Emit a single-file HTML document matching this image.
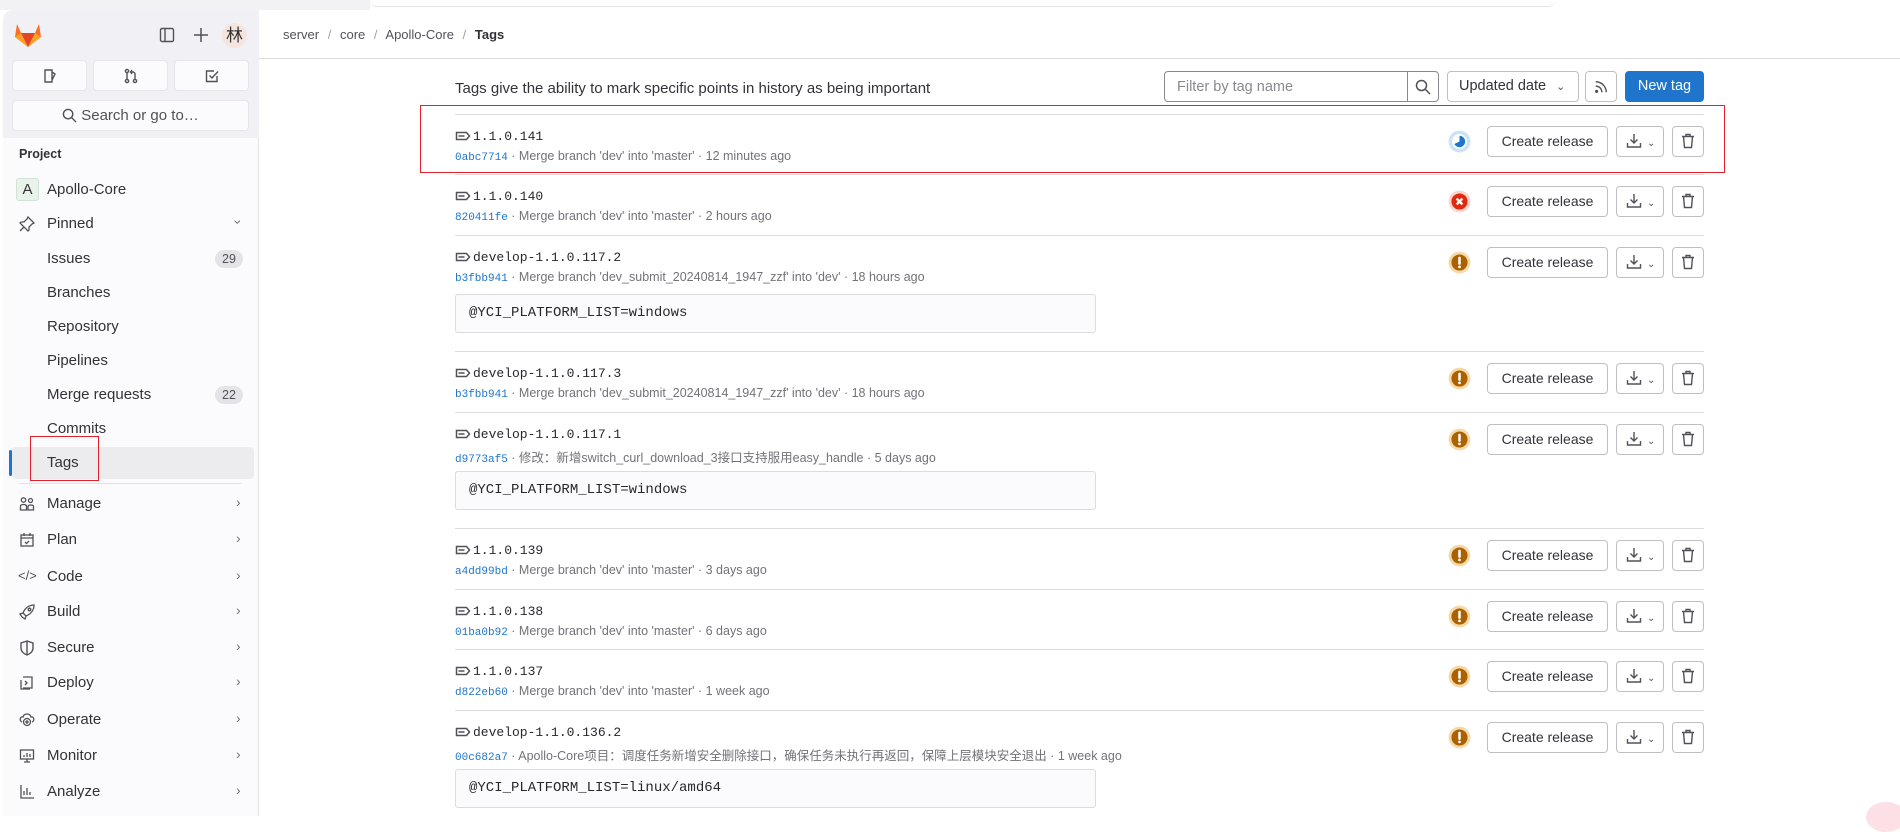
<!DOCTYPE html>
<html><head><meta charset="utf-8"><style>
*{box-sizing:border-box;margin:0;padding:0}
body{width:1900px;height:816px;overflow:hidden;background:#fff;font-family:"Liberation Sans","Noto Sans CJK SC",sans-serif;color:#333238;position:relative}
.a{position:absolute}
#side{left:3px;top:10px;width:256px;height:806px;background:#fbfafd;border-right:1px solid #e3e3e8;border-top-left-radius:10px}
#sidehead{left:3px;top:10px;width:256px;height:128px;background:#f1f0f4;border-top-left-radius:10px}
.sbtn{background:#fbfafd;border:1px solid #e6e5ea;border-radius:4px;height:31px}
.nav{left:47px;font-size:15px;color:#333238}
.ico{left:17px;width:16px;height:16px}
.chev{left:236px;font-size:14px;color:#737278}
.badge{background:#e4e3e8;border-radius:10px;font-size:12.5px;color:#535158;padding:2px 7px}
.mono{font-family:"Liberation Mono",monospace}
.row-name{left:473px;font-size:13px;color:#28272d}
.meta{left:455px;font-size:12.5px;color:#737278;white-space:nowrap}
.meta .mono{color:#1f75cb;font-size:11px}
.div{left:455px;width:1249px;height:1px;background:#dcdcde}
.btn{border:1px solid #bfbfc3;border-radius:4px;background:#fff;height:31px;font-size:14px;color:#333238;text-align:center;line-height:29px;white-space:nowrap}
.code{left:455px;width:641px;height:39px;background:#fbfafd;border:1px solid #dcdcde;border-radius:3px;font-family:"Liberation Mono",monospace;font-size:14px;padding-left:13px;line-height:37px;color:#28272d}
</style></head><body>
<div class="a" style="left:0;top:0;width:370px;height:10px;background:#f2f2f4"></div>
<div class="a" style="left:370px;top:0;width:1185px;height:7px;background:#fff;border-bottom:1px solid #e3e3e3;border-radius:0 0 8px 8px"></div>
<div class="a" id="side"></div>
<div class="a" id="sidehead"></div>
<svg class="a" style="left:14px;top:22px" width="28" height="26" viewBox="0 0 28 26"><path d="M14 25 L1 15 L3 2 L7 11 H21 L25 2 L27 15 Z" fill="#fc6d26"/><path d="M14 25 L7 11 H21 Z" fill="#e24329"/><path d="M1 15 L7 11 L14 25Z" fill="#fca326"/><path d="M27 15 L21 11 L14 25Z" fill="#fca326"/></svg>
<svg class="a" style="left:159px;top:27px" width="16" height="16" viewBox="0 0 16 16" fill="none" stroke="#535158" stroke-width="1.4"><rect x="1.5" y="1.5" width="13" height="13" rx="1.5"/><path d="M6 1.5v13"/></svg>
<svg class="a" style="left:193px;top:27px" width="16" height="16" viewBox="0 0 16 16" stroke="#535158" stroke-width="1.5"><path d="M8 1v14M1 8h14"/></svg>
<div class="a" style="left:222px;top:23px;width:25px;height:25px;border-radius:50%;background:#f6e4df;font-size:17px;text-align:center;line-height:25px;color:#333">林</div>
<div class="a sbtn" style="left:12px;top:60px;width:75px"></div>
<div class="a sbtn" style="left:93px;top:60px;width:75px"></div>
<div class="a sbtn" style="left:174px;top:60px;width:75px"></div>
<svg class="a" style="left:42px;top:68px" width="16" height="16" viewBox="0 0 16 16" fill="none" stroke="#535158" stroke-width="1.4"><path d="M3 2h7v12H3z M10 4l3 2-3 6"/></svg>
<svg class="a" style="left:123px;top:68px" width="16" height="16" viewBox="0 0 16 16" fill="none" stroke="#535158" stroke-width="1.4"><circle cx="4" cy="3" r="1.6"/><circle cx="4" cy="13" r="1.6"/><circle cx="12" cy="13" r="1.6"/><path d="M4 5v6M12 11V6c0-1-1-2-2-2H8M9 2 7.5 4 9 6"/></svg>
<svg class="a" style="left:204px;top:68px" width="16" height="16" viewBox="0 0 16 16" fill="none" stroke="#535158" stroke-width="1.4"><path d="M13 8v5.5H2.5V3H10"/><path d="M5.5 7.5 8 10l6-6.5"/></svg>
<div class="a sbtn" style="left:12px;top:100px;width:237px;height:31px;font-size:15px;color:#535158;text-align:center;line-height:29px"><svg style="vertical-align:-3px;margin-right:4px" width="15" height="15" viewBox="0 0 16 16" fill="none" stroke="#535158" stroke-width="1.5"><circle cx="6.5" cy="6.5" r="5"/><path d="M10.5 10.5 15 15"/></svg>Search or go to…</div>
<div class="a" style="left:19px;top:147px;font-size:12.5px;font-weight:bold;color:#333238">Project</div>
<div class="a" style="left:16px;top:178px;width:23px;height:23px;background:#e9f3ec;border:1px solid #d0e4d6;border-radius:3px;font-size:15px;text-align:center;line-height:21px;color:#333">A</div>
<div class="a nav" style="top:181px">Apollo-Core</div>
<svg class="a ico" style="top:216px;left:19px" viewBox="0 0 16 16" fill="none" stroke="#535158" stroke-width="1.3"><path d="M9 1l6 6-2 1-3 3v3l-1 1-8-8 1-1h3l3-3z M5 11 1 15"/></svg>
<div class="a nav" style="top:215px">Pinned</div>
<div class="a chev" style="top:214px;transform:rotate(90deg)">›</div>
<div class="a nav" style="top:250px">Issues</div><div class="a badge" style="left:215px;top:250px">29</div>
<div class="a nav" style="top:284px">Branches</div>
<div class="a nav" style="top:318px">Repository</div>
<div class="a nav" style="top:352px">Pipelines</div>
<div class="a nav" style="top:386px">Merge requests</div><div class="a badge" style="left:215px;top:386px">22</div>
<div class="a nav" style="top:420px">Commits</div>
<div class="a" style="left:12px;top:447px;width:242px;height:32px;background:#ececef;border-radius:4px"></div>
<div class="a" style="left:9px;top:450px;width:3px;height:26px;background:#1f75cb;border-radius:2px"></div>
<div class="a nav" style="top:454px">Tags</div>
<div class="a" style="left:30px;top:436px;width:69px;height:45px;border:1.5px solid #e3212b"></div>
<div class="a" style="left:19px;top:483px;width:223px;height:1px;background:#e3e3e8"></div>
<svg class="a ico" style="top:496px;left:19px" viewBox="0 0 16 16" fill="none" stroke="#535158" stroke-width="1.3"><circle cx="4.5" cy="4" r="2.2"/><circle cx="11.5" cy="4.5" r="2"/><path d="M1.5 14v-4c0-2 6-2 6 0v4zM9 14v-3.5c0-2 5.5-2 5.5 0V14z"/></svg>
<div class="a nav" style="top:495px">Manage</div><div class="a chev" style="top:494px">›</div>
<svg class="a ico" style="top:532px;left:19px" viewBox="0 0 16 16" fill="none" stroke="#535158" stroke-width="1.3"><rect x="2" y="3" width="12" height="11"/><path d="M2 6h12M5 1v3M11 1v3M6 10l1.5 1.5L10 9"/></svg>
<div class="a nav" style="top:531px">Plan</div><div class="a chev" style="top:530px">›</div>
<div class="a" style="left:18px;top:568px;font-size:13px;color:#535158">&lt;/&gt;</div>
<div class="a nav" style="top:568px">Code</div><div class="a chev" style="top:567px">›</div>
<svg class="a ico" style="top:604px;left:19px" viewBox="0 0 16 16" fill="none" stroke="#535158" stroke-width="1.3"><path d="M15 1C10 1 6 4 4 9l3 3c5-2 8-6 8-11zM4 9 1 10l2 3M7 12l-1 3-3-2"/><circle cx="10.5" cy="5.5" r="1.3"/></svg>
<div class="a nav" style="top:603px">Build</div><div class="a chev" style="top:602px">›</div>
<svg class="a ico" style="top:640px;left:19px" viewBox="0 0 16 16" fill="none" stroke="#535158" stroke-width="1.4"><path d="M8 1 2 3v5c0 3.5 3 6 6 7 3-1 6-3.5 6-7V3zM8 1v14"/></svg>
<div class="a nav" style="top:639px">Secure</div><div class="a chev" style="top:638px">›</div>
<svg class="a ico" style="top:675px;left:19px" viewBox="0 0 16 16" fill="none" stroke="#535158" stroke-width="1.3"><path d="M4 2h9v11H4M2 5v9h9M6 6l2 2-2 2"/></svg>
<div class="a nav" style="top:674px">Deploy</div><div class="a chev" style="top:673px">›</div>
<svg class="a ico" style="top:712px;left:19px" viewBox="0 0 16 16" fill="none" stroke="#535158" stroke-width="1.3"><path d="M3 10C0 9 1 4 4 5c1-4 7-4 8 0 3-1 4 4 1 5"/><circle cx="8" cy="10" r="3.5"/><path d="M8 8v4M6 10h4"/></svg>
<div class="a nav" style="top:711px">Operate</div><div class="a chev" style="top:710px">›</div>
<svg class="a ico" style="top:748px;left:19px" viewBox="0 0 16 16" fill="none" stroke="#535158" stroke-width="1.3"><rect x="1.5" y="2" width="13" height="9"/><path d="M5 14h6M8 11v3M5 9V7M8 9V5M11 9V6"/></svg>
<div class="a nav" style="top:747px">Monitor</div><div class="a chev" style="top:746px">›</div>
<svg class="a ico" style="top:784px;left:19px" viewBox="0 0 16 16" fill="none" stroke="#535158" stroke-width="1.3"><path d="M2 1v13h13M5 11V7M8 11V4M11 11V8"/></svg>
<div class="a nav" style="top:783px">Analyze</div><div class="a chev" style="top:782px">›</div>

<div class="a" style="left:259px;top:58px;width:1641px;height:1px;background:#dcdcde"></div>
<div class="a" style="left:283px;top:27px;font-size:13px;color:#535158">server <span style="color:#a4a3a8;margin:0 5px">/</span> core <span style="color:#a4a3a8;margin:0 5px">/</span> Apollo-Core <span style="color:#a4a3a8;margin:0 5px">/</span> <b style="color:#333238">Tags</b></div>

<div class="a" style="left:455px;top:80px;font-size:15px;color:#333238">Tags give the ability to mark specific points in history as being important</div>
<div class="a" style="left:1164px;top:71px;width:275px;height:31px;border:1px solid #89888d;border-radius:4px;background:#fff"></div>
<div class="a" style="left:1407px;top:72px;width:1px;height:29px;background:#89888d"></div>
<div class="a" style="left:1177px;top:79px;font-size:14.5px;color:#89888d">Filter by tag name</div>
<svg class="a" style="left:1415px;top:79px" width="16" height="16" viewBox="0 0 16 16" fill="none" stroke="#535158" stroke-width="1.5"><circle cx="6.5" cy="6.5" r="5"/><path d="M10.5 10.5 15 15"/></svg>
<div class="a btn" style="left:1447px;top:71px;width:132px;text-align:left;padding-left:11px;font-size:14.5px">Updated date <span style="font-size:11px;color:#535158;margin-left:6px">⌄</span></div>
<div class="a btn" style="left:1585px;top:71px;width:32px"><svg width="14" height="14" viewBox="0 0 16 16" fill="none" stroke="#535158" stroke-width="1.6" style="margin-top:8px"><path d="M2 7a7 7 0 0 1 7 7M2 2a12 12 0 0 1 12 12"/><circle cx="3" cy="13" r="1" fill="#535158"/></svg></div>
<div class="a" style="left:1625px;top:71px;width:79px;height:31px;background:#1f75cb;border-radius:4px;color:#fff;font-size:14.5px;text-align:center;line-height:31px">New tag</div>

<div id="rows"></div>
<div class="a" style="left:420px;top:105px;width:1305px;height:68px;border:1.5px solid #e3212b"></div>
<div class="a" style="left:1866px;top:802px;width:40px;height:30px;border-radius:50%;background:#fde0e6"></div>
<script>
const rows=[
["1.1.0.141","0abc7714","Merge branch 'dev' into 'master' · 12 minutes ago","run",114,0],
["1.1.0.140","820411fe","Merge branch 'dev' into 'master' · 2 hours ago","fail",174,0],
["develop-1.1.0.117.2","b3fbb941","Merge branch 'dev_submit_20240814_1947_zzf' into 'dev' · 18 hours ago","warn",235,"@YCI_PLATFORM_LIST=windows"],
["develop-1.1.0.117.3","b3fbb941","Merge branch 'dev_submit_20240814_1947_zzf' into 'dev' · 18 hours ago","warn",351,0],
["develop-1.1.0.117.1","d9773af5","修改：新增switch_curl_download_3接口支持服用easy_handle · 5 days ago","warn",412,"@YCI_PLATFORM_LIST=windows"],
["1.1.0.139","a4dd99bd","Merge branch 'dev' into 'master' · 3 days ago","warn",528,0],
["1.1.0.138","01ba0b92","Merge branch 'dev' into 'master' · 6 days ago","warn",589,0],
["1.1.0.137","d822eb60","Merge branch 'dev' into 'master' · 1 week ago","warn",649,0],
["develop-1.1.0.136.2","00c682a7","Apollo-Core项目：调度任务新增安全删除接口，确保任务未执行再返回，保障上层模块安全退出 · 1 week ago","warn",710,"@YCI_PLATFORM_LIST=linux/amd64"]];
const st={run:'<circle cx="10" cy="10" r="9.5" fill="#cbe2f9"/><circle cx="10" cy="10" r="6.5" fill="#fff"/><path d="M10 5a5 5 0 1 1-4.5 7.2L10 10z" fill="#1f75cb"/>',
fail:'<circle cx="10" cy="10" r="9.5" fill="#fdd4cd"/><circle cx="10" cy="10" r="7" fill="#dd2b0e"/><path d="M7.5 7.5l5 5M12.5 7.5l-5 5" stroke="#fff" stroke-width="2"/>',
warn:'<circle cx="10" cy="10" r="9.5" fill="#f5d9a8"/><circle cx="10" cy="10" r="7" fill="#ab6100"/><path d="M10 6v5" stroke="#fff" stroke-width="2.2" stroke-linecap="round"/><circle cx="10" cy="13.8" r="1.2" fill="#fff"/>'};
let h='';
for(const r of rows){const y=r[4];
h+=`<div class="a div" style="top:${y}px"></div>`;
h+=`<svg class="a" style="left:455px;top:${y+16}px" width="16" height="12" viewBox="0 0 16 12" fill="none" stroke="#535158" stroke-width="1.5"><path d="M1.5 2.5h10l3 3.5-3 3.5h-10z"/><path d="M3.5 6h6"/></svg>`;
h+=`<div class="a row-name mono" style="top:${y+15}px;font-size:13px">${r[0]}</div>`;
h+=`<div class="a meta" style="top:${y+35}px"><span class="mono">${r[1]}</span> · ${r[2]}</div>`;
h+=`<svg class="a" style="left:1448px;top:${y+16}px" width="23" height="23" viewBox="0 0 20 20">${st[r[3]]}</svg>`;
h+=`<div class="a btn" style="left:1487px;top:${y+12}px;width:121px">Create release</div>`;
h+=`<div class="a btn" style="left:1616px;top:${y+12}px;width:48px;text-align:left;padding-left:9px"><svg width="16" height="16" viewBox="0 0 16 16" fill="none" stroke="#535158" stroke-width="1.4" style="vertical-align:-3px"><path d="M8 1v9M4.5 6.5 8 10l3.5-3.5M1.5 10v4h13v-4"/></svg><span style="font-size:10px;color:#535158;margin-left:5px">⌄</span></div>`;
h+=`<div class="a btn" style="left:1672px;top:${y+12}px;width:32px"><svg width="14" height="16" viewBox="0 0 14 16" fill="none" stroke="#535158" stroke-width="1.4" style="vertical-align:-3px"><path d="M1 3.5h12M5 3.5V1.5h4v2M2.5 3.5l1 11h7l1-11"/></svg></div>`;
if(r[5]) h+=`<div class="a code" style="top:${y+59}px">${r[5]}</div>`;
}
document.getElementById('rows').innerHTML=h;
</script>
</body></html>
